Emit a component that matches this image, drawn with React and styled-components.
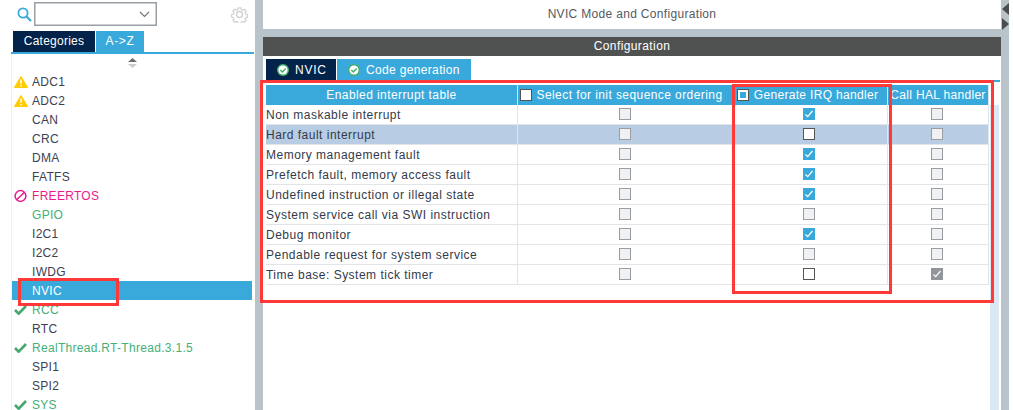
import React from 'react';
import styled, { createGlobalStyle } from 'styled-components';

const Global = createGlobalStyle`
  html, body { margin: 0; padding: 0; background: #fff; }
  body { font-family: "Liberation Sans", Arial, sans-serif; font-size: 12px; color: #3c4150; }
`;

const Page = styled.div`
  position: relative;
  width: 1013px;
  height: 410px;
  overflow: hidden;
  display: grid;
  grid-template-columns: 255px 8px 738px 8px 4px;
`;

const Sidebar = styled.aside`
  display: flex;
  flex-direction: column;
  padding-left: 11px;
  height: 410px;
  background: #fff;
`;
const SearchBar = styled.div`
  display: flex;
  align-items: center;
  height: 31px;
  padding: 0 7px 3px 17px;
  box-sizing: border-box;
  margin-left: -11px;
`;
const SelectBox = styled.div`
  width: 123px;
  height: 24px;
  box-sizing: border-box;
  margin-left: 2px;
  border: 1px solid #9a9fa3;
  box-shadow: inset 0 0 0 0.5px #9a9fa3;
  display: flex;
  align-items: center;
  justify-content: flex-end;
  padding-right: 6px;
`;
const GearWrap = styled.div`
  margin-left: auto;
  display: flex;
`;
const SideTabs = styled.div`
  display: flex;
  gap: 1px;
  height: 21px;
  padding-left: 2px;
  width: 243px;
  box-sizing: border-box;
`;
const SideTab = styled.div`
  width: ${p => p.$w}px;
  background: ${p => p.$active ? '#39a9dc' : '#03234b'};
  color: #fff;
  letter-spacing: ${p => p.$ls}px;
  line-height: 20px;
  text-align: center;
  box-sizing: border-box;
`;
const BlueLine = styled.div`
  height: 2px;
  width: 243px;
  background: #39a9dc;
`;
const ListArea = styled.div`
  flex: 1;
  border-left: 1px solid #eef0f2;
  width: 240px;
  overflow: hidden;
`;
const ScrollKnob = styled.div`
  display: flex;
  justify-content: center;
  height: 18px;
  padding-top: 4px;
  box-sizing: border-box;
`;
const Item = styled.div`
  display: flex;
  align-items: center;
  height: 19px;
  position: relative;
  padding-left: 20px;
  background: ${p => p.$selected ? '#39a9dc' : 'transparent'};
  color: ${p => p.$selected ? '#fff' : p.$color || '#3c4150'};
  letter-spacing: 0.3px;
  white-space: nowrap;
`;
const ItemIcon = styled.span`
  position: absolute;
  left: 2px;
  top: 50%;
  transform: translateY(-50%);
  display: flex;
`;

const Divider = styled.div`
  background: #b9c4ca;
`;

const Main = styled.main`
  display: flex;
  flex-direction: column;
  background: #fff;
  height: 410px;
`;
const TitleBar = styled.div`
  height: 29px;
  line-height: 29px;
  text-align: center;
  color: #555a5f;
  letter-spacing: 0.32px;
  flex: none;
`;
const TitleGap = styled.div`
  height: 8px;
  background: #b9c4ca;
  flex: none;
`;
const ConfigBar = styled.div`
  height: 19px;
  line-height: 19px;
  background: #505251;
  color: #fff;
  text-align: center;
  letter-spacing: 0.4px;
  flex: none;
`;
const ModeTabs = styled.div`
  display: flex;
  gap: 1px;
  padding: 3px 0 0 3px;
  height: 21px;
  flex: none;
`;
const ModeTab = styled.div`
  width: ${p => p.$w}px;
  display: flex;
  align-items: center;
  gap: 6px;
  padding-left: 11px;
  box-sizing: border-box;
  background: ${p => p.$active ? '#03234b' : '#39a9dc'};
  color: #fff;
  letter-spacing: ${p => p.$ls}px;
`;
const TabRule = styled.div`
  height: 2px;
  width: 737px;
  background: #39a9dc;
  flex: none;
`;
const TableWrap = styled.div`
  flex: 1;
  padding: 3px 0 0 3px;
  display: flex;
  align-items: stretch;
`;
const Table = styled.div`
  width: 723px;
`;
const Track = styled.div`
  width: 9px;
  margin-top: 20px;
  margin-left: 1px;
  background: #dbe8f4;
`;
const Grid = styled.div`
  display: grid;
  grid-template-columns: 252px 215px 155px 101px;
`;
const HeadCell = styled.div`
  height: 20px;
  background: #39a9dc;
  color: #fff;
  display: flex;
  align-items: center;
  justify-content: center;
  gap: 5px;
  letter-spacing: ${p => p.$ls ?? 0.42}px;
  padding-right: ${p => p.$pr ?? 0}px;
  white-space: nowrap;
  box-sizing: border-box;
  border-right: 1px solid #d8e6ef;
`;
const HeadBox = styled.span`
  width: 12px;
  height: 12px;
  box-sizing: border-box;
  border: 1px solid #555;
  background: #fff;
  display: flex;
  align-items: center;
  justify-content: center;
  &::after {
    content: '';
    display: ${p => p.$mixed ? 'block' : 'none'};
    width: 6px;
    height: 6px;
    background: #39a9dc;
  }
`;
const Cell = styled.div`
  height: 20px;
  box-sizing: border-box;
  border-bottom: 1px solid #e2e4e8;
  border-right: 1px solid #e2e4e8;
  background: ${p => p.$hl ? '#b8cde4' : '#fff'};
  display: flex;
  align-items: center;
  justify-content: ${p => p.$label ? 'flex-start' : 'center'};
  padding-right: ${p => p.$pr ?? 0}px;
  color: #333a4a;
  letter-spacing: 0.49px;
  white-space: nowrap;
`;
const Box = styled.span`
  width: 12px;
  height: 12px;
  box-sizing: border-box;
  display: flex;
  border: 1px solid ${p => ({ off: '#999ca1', empty: '#555', on: '#39a9dc', grey: '#92969b' }[p.$k])};
  background: ${p => ({ off: '#f0f1f3', empty: '#fff', on: '#39a9dc', grey: '#92969b' }[p.$k])};
  margin-bottom: 1px;
`;

const Strip = styled.div`
  background: #b9c4ca;
  display: flex;
  flex-direction: column;
  gap: 3px;
  padding: 3px 0 0 1px;
`;

const Mark = styled.div`
  position: absolute;
  left: ${p => p.$x}px;
  top: ${p => p.$y}px;
  width: ${p => p.$w}px;
  height: ${p => p.$h}px;
  box-sizing: border-box;
  border: 3px solid #ff3838;
  pointer-events: none;
`;

const Search = () => (
  <svg width="15" height="15" viewBox="0 0 15 15" fill="none" stroke="#39a9dc">
    <circle cx="6" cy="6" r="4.6" strokeWidth="1.8" />
    <path d="M9.5 9.5L14 14" strokeWidth="2.2" />
  </svg>
);
const Chevron = () => (
  <svg width="11" height="7" viewBox="0 0 11 7" fill="none" stroke="#70757a" strokeWidth="1.2">
    <path d="M1 1l4.5 4.5L10 1" />
  </svg>
);
const Gear = () => (
  <svg width="17" height="17" viewBox="0 0 17 17" fill="none" stroke="#cfd2d5">
    <path strokeWidth="1.4" d="M7 1h3l.4 2 1.6.7 1.8-1.1 2 2.1-1.1 1.7.7 1.6 2 .4v3l-2 .4-.7 1.6 1.1 1.8-2.1 2-1.7-1.1-1.6.7-.4 2H7l-.4-2-1.6-.7-1.8 1.1-2-2.1 1.1-1.7-.7-1.6-2-.4v-3l2-.4.7-1.6L1 4.7l2.1-2 1.7 1.1 1.6-.7z" transform="translate(0.9 0.9) scale(0.9)" />
    <circle cx="8.5" cy="8.5" r="3" strokeWidth="1.4" />
  </svg>
);
const Knob = () => (
  <svg width="9" height="10" viewBox="0 0 9 10">
    <path d="M4.5 0L9 4H0z" fill="#6a6e72" />
    <path d="M0 6h9L4.5 10z" fill="#c9ccd0" />
  </svg>
);
const Warn = () => (
  <svg width="14" height="12" viewBox="0 0 14 12">
    <path d="M7 .5L13.6 11.5H.4z" fill="#ffcc00" stroke="#ffcc00" strokeLinejoin="round" />
    <path d="M6.3 3.5h1.4v4.5H6.3zM6.3 9h1.4v1.5H6.3z" fill="#fff" />
  </svg>
);
const Ban = () => (
  <svg width="13" height="13" viewBox="0 0 13 13" fill="none" stroke="#ee1a8c" strokeWidth="1.5">
    <circle cx="6.5" cy="6.5" r="5.4" />
    <path d="M2.7 10.3l7.6-7.6" />
  </svg>
);
const Check = () => (
  <svg width="13" height="11" viewBox="0 0 13 11" fill="none" stroke="#45a86e" strokeWidth="2.6">
    <path d="M1 5.5l3.7 3.7L12 1.5" />
  </svg>
);
const TabOk = () => (
  <svg width="12" height="12" viewBox="0 0 12 12" fill="none">
    <circle cx="6" cy="6" r="6" fill="#45b06e" />
    <circle cx="6" cy="6" r="4.6" fill="#fff" />
    <path d="M3.3 6l2 2 3.4-3.6" stroke="#45b06e" strokeWidth="1.5" />
  </svg>
);
const Tick = () => (
  <svg width="10" height="10" viewBox="0 0 10 10" fill="none" stroke="#fff" strokeWidth="1.2">
    <path d="M1.5 5.5l2.2 2.2L8.5 2" />
  </svg>
);
const Tri = ({ dir }) => (
  <svg width="7" height="12" viewBox="0 0 7 12">
    <path d={dir === 'l' ? 'M7 0v12L0 6z' : 'M0 0v12L7 6z'} fill="#4a4d50" />
  </svg>
);

const GREEN = '#45b078';
const items = [
  ['ADC1', 'warn'], ['ADC2', 'warn'], ['CAN'], ['CRC'], ['DMA'], ['FATFS'],
  ['FREERTOS', 'ban', '#ee1a8c'], ['GPIO', null, GREEN], ['I2C1'], ['I2C2'], ['IWDG'],
  ['NVIC', 'sel'], ['RCC', 'check', GREEN], ['RTC'],
  ['RealThread.RT-Thread.3.1.5', 'check', GREEN], ['SPI1'], ['SPI2'], ['SYS', 'check', GREEN],
];

const rows = [
  ['Non maskable interrupt', 'off', 'on', 'off'],
  ['Hard fault interrupt', 'off', 'empty', 'off', true],
  ['Memory management fault', 'off', 'on', 'off'],
  ['Prefetch fault, memory access fault', 'off', 'on', 'off'],
  ['Undefined instruction or illegal state', 'off', 'on', 'off'],
  ['System service call via SWI instruction', 'off', 'off', 'off'],
  ['Debug monitor', 'off', 'on', 'off'],
  ['Pendable request for system service', 'off', 'off', 'off'],
  ['Time base: System tick timer', 'off', 'empty', 'grey'],
];

export default function App() {
  return (
    <Page>
      <Global />
      <Sidebar>
        <SearchBar>
          <Search />
          <SelectBox><Chevron /></SelectBox>
          <GearWrap><Gear /></GearWrap>
        </SearchBar>
        <SideTabs>
          <SideTab $w={82} $ls={0.25}>Categories</SideTab>
          <SideTab $w={48} $ls={0.7} $active>A-&gt;Z</SideTab>
        </SideTabs>
        <BlueLine />
        <ListArea>
          <ScrollKnob><Knob /></ScrollKnob>
          {items.map(([name, kind, color]) => (
            <Item key={name} $selected={kind === 'sel'} $color={color}>
              {kind && kind !== 'sel' && (
                <ItemIcon>
                  {kind === 'warn' && <Warn />}
                  {kind === 'ban' && <Ban />}
                  {kind === 'check' && <Check />}
                </ItemIcon>
              )}
              {name}
            </Item>
          ))}
        </ListArea>
      </Sidebar>
      <Divider />
      <Main>
        <TitleBar>NVIC Mode and Configuration</TitleBar>
        <TitleGap />
        <ConfigBar>Configuration</ConfigBar>
        <ModeTabs>
          <ModeTab $w={70} $ls={0.75} $active><TabOk />NVIC</ModeTab>
          <ModeTab $w={134} $ls={0.34}><TabOk />Code generation</ModeTab>
        </ModeTabs>
        <TabRule />
        <TableWrap>
          <Table>
            <Grid>
              <HeadCell>Enabled interrupt table</HeadCell>
              <HeadCell $pr={8}><HeadBox />Select for init sequence ordering</HeadCell>
              <HeadCell $pr={5} $ls={0.32}><HeadBox $mixed />Generate IRQ handler</HeadCell>
              <HeadCell $ls={0.32}>Call HAL handler</HeadCell>
              {rows.map(([label, a, b, c, hl]) => (
                <React.Fragment key={label}>
                  <Cell $label $hl={hl}>{label}</Cell>
                  {[a, b, c].map((k, i) => (
                    <Cell key={i} $hl={hl} $pr={i > 0 ? 2 : 0}>
                      <Box $k={k}>{(k === 'on' || k === 'grey') && <Tick />}</Box>
                    </Cell>
                  ))}
                </React.Fragment>
              ))}
            </Grid>
          </Table>
          <Track />
        </TableWrap>
      </Main>
      <Strip><Tri dir="l" /><Tri dir="r" /></Strip>
      <div />
      <Mark $x={18} $y={278} $w={101} $h={28} />
      <Mark $x={260} $y={80} $w={734} $h={223} />
      <Mark $x={732} $y={84} $w={160} $h={210} />
    </Page>
  );
}
